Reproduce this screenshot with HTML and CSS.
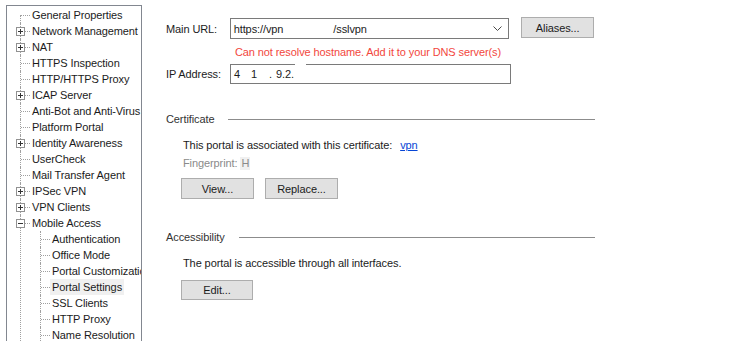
FILE: index.html
```html
<!DOCTYPE html>
<html lang="en">
<head>
    <meta charset="UTF-8">
    <meta name="viewport" content="width=device-width, initial-scale=1.0">
    <title>Portal Settings</title>

    <link rel="stylesheet" href="styles.css">

</head>
<body>

<div class="page">

  <!-- left navigation tree -->
  <div class="tree">
    <ul class="nodes">
      <li class="first"><span class="label">General Properties</span></li>
      <li class="closed"><i class="box"></i><span class="label">Network Management</span></li>
      <li class="closed"><i class="box"></i><span class="label">NAT</span></li>
      <li><span class="label">HTTPS Inspection</span></li>
      <li><span class="label">HTTP/HTTPS Proxy</span></li>
      <li class="closed"><i class="box"></i><span class="label">ICAP Server</span></li>
      <li><span class="label">Anti-Bot and Anti-Virus</span></li>
      <li><span class="label">Platform Portal</span></li>
      <li class="closed"><i class="box"></i><span class="label">Identity Awareness</span></li>
      <li><span class="label">UserCheck</span></li>
      <li><span class="label">Mail Transfer Agent</span></li>
      <li class="closed"><i class="box"></i><span class="label">IPSec VPN</span></li>
      <li class="closed"><i class="box"></i><span class="label">VPN Clients</span></li>
      <li class="open"><i class="box"></i><span class="label">Mobile Access</span>
        <ul class="nodes">
          <li><span class="label">Authentication</span></li>
          <li><span class="label">Office Mode</span></li>
          <li><span class="label">Portal Customization</span></li>
          <li><span class="label selected">Portal Settings</span></li>
          <li><span class="label">SSL Clients</span></li>
          <li><span class="label">HTTP Proxy</span></li>
          <li><span class="label">Name Resolution</span></li>
        </ul>
      </li>
    </ul>
  </div>

  <!-- settings pane -->
  <div class="settings">

    <div class="field-row url-row">
      <label class="field-label">Main URL:</label>
      <div class="combo">
        <span class="value">https://vpn<span class="url-tail">/sslvpn</span></span>
        <svg class="chevron" width="9" height="5" viewBox="0 0 9 5">
          <polyline points="0.5,0.5 4.5,4.5 8.5,0.5" fill="none" stroke="#4a4a4a" stroke-width="1"/>
        </svg>
      </div>
      <button class="btn aliases">Aliases...</button>
    </div>

    <div class="error-message">Can not resolve hostname. Add it to your DNS server(s)</div>

    <div class="field-row ip-row">
      <label class="field-label">IP Address:</label>
      <div class="textbox">
        <span class="value">4<span class="gap-a">1</span><span class="gap-b">.</span><span class="gap-c">9.2.</span></span>
        <span class="mask"></span>
      </div>
    </div>

    <div class="group-title cert-title">
      <span>Certificate</span>
      <span class="rule"></span>
    </div>

    <div class="group-body">
      <div class="cert-line">This portal is associated with this certificate: <a href="#" class="cert-link">vpn</a></div>
      <div class="fingerprint">
        <span>Fingerprint:</span>
        <span class="fp-value">H</span>
        <span class="fp-rest"></span>
      </div>
      <div class="btn-row">
        <button class="btn">View...</button>
        <button class="btn">Replace...</button>
      </div>
    </div>

    <div class="group-title access-title">
      <span>Accessibility</span>
      <span class="rule"></span>
    </div>

    <div class="group-body">
      <div class="access-line">The portal is accessible through all interfaces.</div>
      <div class="btn-row edit-row">
        <button class="btn edit">Edit...</button>
      </div>
    </div>

  </div>
</div>

</body>
</html>
```

FILE: styles.css
```css
* {
  box-sizing: border-box;
}

body {
  margin: 0;
  padding: 0;
  background: #ffffff;
  font-family: 'Liberation Sans', Arial, sans-serif;
  font-size: 11px;
  letter-spacing: -0.1px;
  color: #1b1b1b;
  overflow: hidden;
}

.page {
  display: flex;
  align-items: flex-start;
  height: 341px;
  overflow: hidden;
}

/* ---------- tree ---------- */

.tree {
  flex: 0 0 136px;
  height: 341px;
  margin: 5px 0 0 6px;
  padding-top: 1px;
  border: 1px solid #828790;
  border-bottom: none;
  overflow: hidden;
  white-space: nowrap;
}

.nodes {
  list-style: none;
  margin: 0;
  padding: 0 0 0 25px;
}

.nodes .nodes {
  padding-left: 20px;
}

.nodes li {
  position: relative;
}

/* vertical dotted connector */
.nodes li::before {
  content: "";
  position: absolute;
  left: -12px;
  top: 0;
  bottom: 0;
  border-left: 1px dotted #a0a0a0;
}

.nodes li.first::before {
  top: 8px;
}

/* horizontal dotted connector */
.nodes li::after {
  content: "";
  position: absolute;
  left: -11px;
  top: 8px;
  width: 9px;
  border-top: 1px dotted #a0a0a0;
}

.label {
  display: inline-block;
  height: 16px;
  line-height: 16px;
  padding: 0 2px;
  margin-left: -2px;
}

.label.selected {
  background: #f0f0f0;
}

.box {
  position: absolute;
  left: -16px;
  top: 4px;
  width: 9px;
  height: 9px;
  border: 1px solid #919191;
  background: #ffffff;
  z-index: 1;
}

.box::before {
  content: "";
  position: absolute;
  left: 1px;
  top: 3px;
  width: 5px;
  height: 1px;
  background: #333333;
}

.closed > .box::after {
  content: "";
  position: absolute;
  left: 3px;
  top: 1px;
  width: 1px;
  height: 5px;
  background: #333333;
}

/* ---------- settings pane ---------- */

.settings {
  padding: 18px 0 0 24px;
  width: 452px;
}

.field-row {
  display: flex;
  align-items: center;
}

.field-label {
  width: 64px;
}

.combo,
.textbox {
  position: relative;
  display: flex;
  align-items: center;
  width: 281px;
  height: 21px;
  padding-left: 3px;
  border: 1px solid #7a7a7a;
  background: #ffffff;
}

.textbox {
  height: 20px;
}

.value {
  flex: 1;
  white-space: nowrap;
}

.url-tail {
  margin-left: 50px;
}

.chevron {
  margin-right: 6px;
}

.gap-a {
  margin-left: 11px;
}

.gap-b {
  margin-left: 12px;
}

.gap-c {
  margin-left: 4px;
}

/* white patch over the top border of the ip field */
.mask {
  position: absolute;
  left: 64px;
  top: -1px;
  width: 11px;
  height: 4px;
  background: #ffffff;
}

.btn {
  height: 21px;
  padding: 0;
  border: 1px solid #adadad;
  background: #e1e1e1;
  color: #1b1b1b;
  font-family: inherit;
  font-size: 11px;
  letter-spacing: -0.1px;
  width: 73px;
}

.aliases {
  margin-left: 12px;
  position: relative;
  top: -1px;
}

.error-message {
  margin: 5px 0 0 69px;
  line-height: 16px;
  color: #f2473d;
}

.ip-row {
  margin-top: 4px;
}

.group-title {
  display: flex;
  align-items: center;
  gap: 14px;
  height: 16px;
  width: 429px;
  color: #333333;
}

.group-title .rule {
  flex: 1;
  border-top: 1px solid #8c8c8c;
}

.cert-title {
  margin-top: 27px;
}

.access-title {
  margin-top: 30px;
}

.group-body {
  padding-left: 17px;
  line-height: 16px;
}

.cert-line {
  margin-top: 10px;
}

.cert-link {
  margin-left: 5px;
  color: #0645d6;
}

.fingerprint {
  display: flex;
  align-items: center;
  margin-top: 2px;
  color: #8a8a8a;
}

.fp-value {
  margin-left: 3px;
  padding: 0 1px;
  background: #f0f0f0;
  line-height: 13px;
}

.fp-rest {
  margin-left: 364px;
  width: 45px;
  height: 13px;
  background: #f0f0f0;
}

.btn-row {
  display: flex;
  gap: 11px;
  margin: 7px 0 0 -2px;
}

.access-line {
  margin-top: 10px;
}

.edit-row {
  margin-top: 9px;
}

.edit {
  height: 20px;
  width: 72px;
}
```
